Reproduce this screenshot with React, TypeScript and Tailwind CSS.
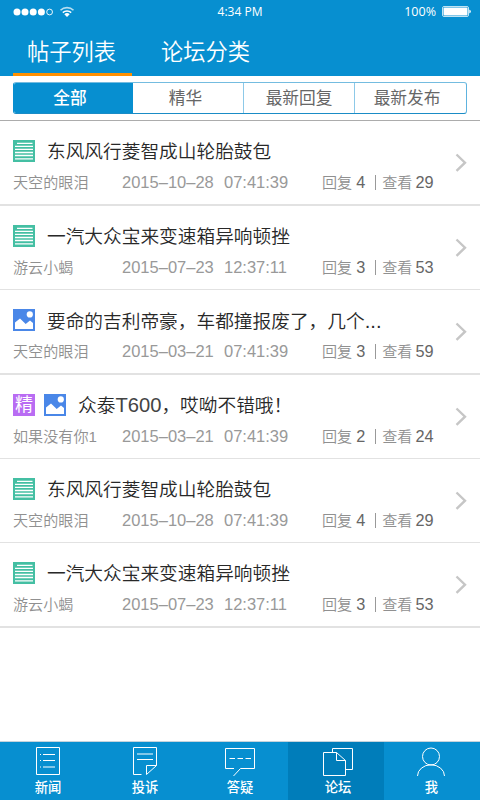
import type { ReactNode } from 'react';
import clsx from 'clsx';

type Badge = 'text' | 'image' | 'digest';

interface Post {
  title: ReactNode;
  author: string;
  date: string;
  time: string;
  replies: number;
  views: number;
  badges: Badge[];
  rowClass: string;
}

const posts: Post[] = [
  { title: '东风风行菱智成山轮胎鼓包', author: '天空的眼泪', date: '2015–10–28', time: '07:41:39', replies: 4, views: 29, badges: ['text'], rowClass: 'h-[85px] border-b-2' },
  { title: '一汽大众宝来变速箱异响顿挫', author: '游云小蝎', date: '2015–07–23', time: '12:37:11', replies: 3, views: 53, badges: ['text'], rowClass: 'h-[84px] border-b' },
  { title: <>要命的吉利帝豪，车都撞报废了，几个<span className="text-[20.2px]">...</span></>, author: '天空的眼泪', date: '2015–03–21', time: '07:41:39', replies: 3, views: 59, badges: ['image'], rowClass: 'h-[85px] border-b-2' },
  { title: <>众泰<span className="text-[20.2px] leading-none text-[#444]">T600</span>，哎呦不错哦！</>, author: '如果没有你1', date: '2015–03–21', time: '07:41:39', replies: 2, views: 24, badges: ['digest', 'image'], rowClass: 'h-[84px] border-b' },
  { title: '东风风行菱智成山轮胎鼓包', author: '天空的眼泪', date: '2015–10–28', time: '07:41:39', replies: 4, views: 29, badges: ['text'], rowClass: 'h-[84px] border-b' },
  { title: '一汽大众宝来变速箱异响顿挫', author: '游云小蝎', date: '2015–07–23', time: '12:37:11', replies: 3, views: 53, badges: ['text'], rowClass: 'h-[85px] border-b-2' },
];

function StatusBar() {
  return (
    <div className="grid h-[23px] grid-cols-3 items-center font-['Open_Sans',sans-serif] text-xs leading-none text-white">
      <div className="flex items-center pl-[13px]">
        <svg width="62" height="12" viewBox="0 0 62 12" fill="none">
          <circle cx="4" cy="6" r="3.5" fill="white" />
          <circle cx="12" cy="6" r="3.5" fill="white" />
          <circle cx="20.2" cy="6" r="3.5" fill="white" />
          <circle cx="28.4" cy="6" r="3.5" fill="white" />
          <circle cx="36.6" cy="6" r="2.9" stroke="white" strokeWidth="0.9" />
          <path d="M47.5 4.3a9.3 9.3 0 0 1 13 0" stroke="white" strokeWidth="1.6" opacity="0.7" />
          <path d="M49.8 6.6a6.2 6.2 0 0 1 8.4 0" stroke="white" strokeWidth="1.5" />
          <path d="M51.3 8.3a4 4 0 0 1 5.4 0L54 11z" fill="white" />
        </svg>
      </div>
      <span className="text-center">4:34 PM</span>
      <div className="flex items-center justify-end gap-[6px] pr-[9px]">
        <span className="pt-px text-[12.5px]">100%</span>
        <svg width="29" height="12" viewBox="0 0 29 12">
          <rect x="0.5" y="0.5" width="26" height="10" rx="1.5" fill="none" stroke="white" opacity="0.75" />
          <rect x="1.5" y="1.5" width="24" height="8" rx="1" fill="white" />
          <path d="M27.3 3.5v4l1.5-1.2V4.7z" fill="white" />
        </svg>
      </div>
    </div>
  );
}

function Header() {
  return (
    <header className="h-[76px] bg-[#078fd0]">
      <StatusBar />
      <nav className="flex h-[53px] pl-[13px] text-[22.3px] font-[350] text-white">
        <button className="h-full w-[119px] border-b-[3px] border-[#ff9000] pt-[10px] pr-[2px]">帖子列表</button>
        <button className="ml-[14px] h-full w-[119px] border-b-[3px] border-transparent pt-[10px]">论坛分类</button>
      </nav>
    </header>
  );
}

function Filters() {
  return (
    <div className="h-[45px] border-b border-[#acacac] pt-[6px] pl-[13px]">
      <div className="flex h-8 w-[454px] overflow-hidden rounded-[3px] border border-t-[#74bce0] border-r-[#5eb3df] border-b-[#1a8cc6] border-l-[#078fd0] text-[16.7px] text-[#666]">
        <button className="w-[119px] bg-[#078fd0] pt-[2px] pr-[7px] font-medium text-white">全部</button>
        <button className="w-[111px] border-r border-[#8dc9e8] pt-[2px] pr-[5px]">精华</button>
        <button className="w-[111px] border-r border-[#8dc9e8] pt-[2px]">最新回复</button>
        <button className="flex-1 pt-[2px] pr-[7px]">最新发布</button>
      </div>
    </div>
  );
}

function PostBadge({ type }: { type: Badge }) {
  if (type === 'digest') {
    return <span className="flex size-[22px] items-center justify-center bg-[#b96cf3] text-[18px] leading-none text-white">精</span>;
  }
  if (type === 'image') {
    return (
      <svg className="size-[22px]" viewBox="0 0 22 22">
        <path fill="#4a87e8" d="M0 0h22v22H0z" />
        <circle cx="16.8" cy="5.4" r="3.1" fill="white" />
        <path fill="white" d="M2 20v-6.5l5-4 5.7 5.5 4.3-3.5 3 2.5v6z" />
      </svg>
    );
  }
  return (
    <svg className="size-[22px]" viewBox="0 0 22 22">
      <path fill="#44bfa3" d="M0 0h22v22H0z" />
      <path stroke="white" strokeWidth="1.4" d="M4 3.4h15.5M2 6.4h18M2 9.4h18M2 12.5h18M2 15.5h18M2 18.9h18" />
    </svg>
  );
}

function PostRow({ post }: { post: Post }) {
  return (
    <li className={clsx('flex border-[#e2e2e2] pl-[13px]', post.rowClass)}>
      <div className="flex-1">
        <div className="mt-[17px] flex h-[26px] items-center">
          <div className="flex gap-[9px]">
            {post.badges.map((badge) => (
              <PostBadge key={badge} type={badge} />
            ))}
          </div>
          <h2 className="mt-[2px] ml-3 text-[18.7px] leading-[26px] font-[350] whitespace-nowrap text-[#282828]">{post.title}</h2>
        </div>
        <div className="mt-[7px] flex h-[22px] items-center text-[15.1px] leading-[22px] font-[350] whitespace-nowrap text-[#909090]">
          <span className="w-[109px] pt-px">{post.author}</span>
          <span className="w-[102px] text-[16.5px] text-[#999]">{post.date}</span>
          <span className="w-[98px] text-[16.5px] text-[#999]">{post.time}</span>
          <span className="pt-px">回复</span>
          <span className="ml-[4px] w-[19px] text-[16.3px] text-[#666]">{post.replies}</span>
          <span className="mr-[6px] h-[15px] w-px bg-[#999]" />
          <span className="pt-px">查看</span>
          <span className="ml-[3px] text-[16.3px] text-[#666]">{post.views}</span>
        </div>
      </div>
      <svg className="mt-[32px] mr-[13px] h-5 w-3" viewBox="0 0 12 20" fill="none">
        <path d="M1.5 1.5l8.5 8.2-8.5 8.2" stroke="#c6c6c6" strokeWidth="2.4" />
      </svg>
    </li>
  );
}

interface TabItemProps {
  label: string;
  active?: boolean;
  labelClass?: string;
  children: ReactNode;
}

function TabItem({ label, active, labelClass, children }: TabItemProps) {
  return (
    <button className={clsx('flex w-24 flex-col items-center pt-[3px]', active && 'bg-[#007dba]')}>
      <svg width="34" height="32" viewBox="0 0 34 32" fill="none" stroke="white" strokeWidth="1">
        {children}
      </svg>
      <span className={clsx('mt-px text-[13.3px] leading-[20px] font-medium text-white', labelClass)}>{label}</span>
    </button>
  );
}

function TabBar() {
  return (
    <footer className="flex h-[59px] border-t border-[#c5d3dc] bg-[#078fd0]">
      <TabItem label="新闻">
        <path d="M5.5 2.5h23v27h-23z" />
        <path d="M12 9.5h12M12 15.5h12M12 22h12M9 9.5h1M9 15.5h1M9 22h1" />
      </TabItem>
      <TabItem label="投诉" labelClass="pl-[2px]">
        <path d="M14.5 29.5h-8v-27h23v18l-10 9v-9h10M10 9h16M10 14.5h16" />
      </TabItem>
      <TabItem label="答疑">
        <path d="M11 23.5H2.5v-20h29v20H17.5l-7 7.5M6.5 13.5h5.5M14.5 13.5h5.5M22.5 13.5h5.5" />
      </TabItem>
      <TabItem label="论坛" active labelClass="pl-[4px]">
        <path d="M17.5 7.5h-13v23h22v-15zM17.5 7.5v8h9M13.5 7.5v-4h20v21h-7" />
      </TabItem>
      <TabItem label="我" labelClass="pr-px">
        <circle cx="16" cy="11.5" r="8.5" />
        <path d="M2.5 31a13.5 11.2 0 0 1 27 0" />
      </TabItem>
    </footer>
  );
}

export default function App() {
  return (
    <div className="flex h-[800px] w-[480px] flex-col bg-white font-['Liberation_Sans','Noto_Sans_CJK_SC',sans-serif]">
      <Header />
      <Filters />
      <ul className="flex-1">
        {posts.map((post, index) => (
          <PostRow key={index} post={post} />
        ))}
      </ul>
      <TabBar />
    </div>
  );
}
